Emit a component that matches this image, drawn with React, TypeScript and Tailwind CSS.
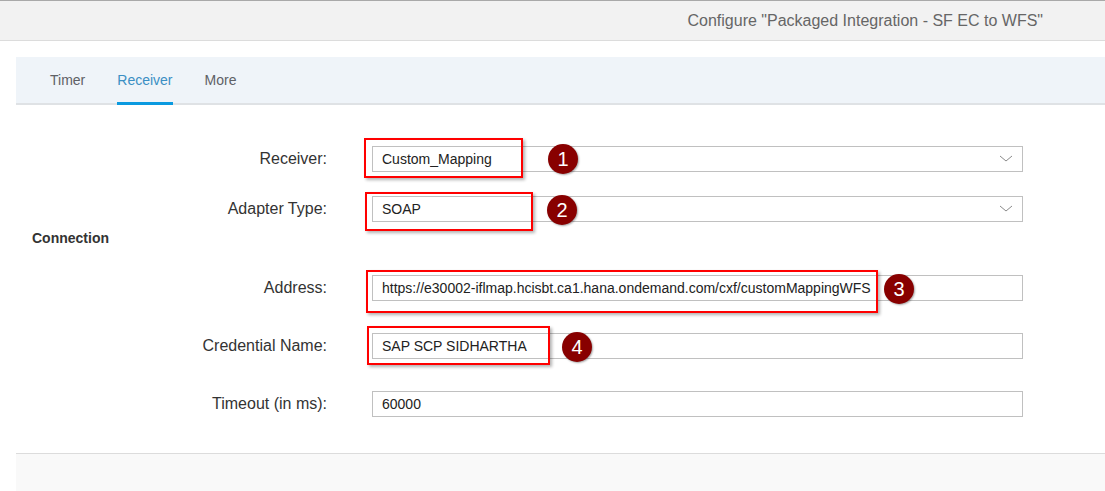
import React from "react";

function Chevron() {
  return (
    <svg width="14" height="8" viewBox="0 0 14 8" className="absolute right-[9px] top-[8px]">
      <path d="M1 1 L7 6 L13 1" fill="none" stroke="#8a8a8a" strokeWidth="1" />
    </svg>
  );
}

function Badge({ n, className }: { n: number; className: string }) {
  return (
    <div
      className={
        "absolute w-[30px] h-[30px] rounded-full bg-[#880000] text-white text-[20px] leading-none flex items-center justify-center shadow-[1px_1px_2px_rgba(0,0,0,0.35)] " +
        className
      }
    >
      {n}
    </div>
  );
}

function Row({
  label,
  value,
  select,
  box,
  badge,
  className,
}: {
  label: string;
  value: string;
  select?: boolean;
  box?: string;
  badge?: React.ReactNode;
  className?: string;
}) {
  return (
    <div className={"flex items-center h-[26px] " + (className || "")}>
      <div className="w-[327px] text-right text-[16px] text-[#333]">{label}</div>
      <div className="ml-[45px] w-[651px] h-[26px] relative border border-[#c0c0c0] bg-white flex items-center pl-[9px] text-[14px] text-[#222]">
        {value}
        {select && <Chevron />}
        {box && (
          <div
            className={
              "absolute border-2 border-[#ff0000] shadow-[2px_2px_3px_rgba(0,0,0,0.3)] " + box
            }
          />
        )}
        {badge}
      </div>
    </div>
  );
}

export default function App() {
  return (
    <div className="w-[1105px] h-[491px] bg-white overflow-hidden flex flex-col font-['Liberation_Sans',Arial,sans-serif]">
      <div className="h-[41px] bg-[#f2f2f2] border-t border-[#a9a9a9] border-b border-b-[#dcdcdc] flex items-center justify-end pr-[62px] text-[16px] text-[#666]">
        Configure "Packaged Integration - SF EC to WFS"
      </div>
      <div className="mt-[16px] ml-[16px] h-[48px] bg-[#eff4f9] border-b-2 border-[#dfe2e5] flex items-stretch pl-[34px] gap-[32px] text-[14px]">
        <div className="flex items-center text-[#5e6166]">Timer</div>
        <div className="flex items-center text-[#3b8fc4] relative">
          Receiver
          <div className="absolute left-0 right-0 bottom-[-2px] h-[3px] bg-[#0a9ae0]" />
        </div>
        <div className="flex items-center text-[#5e6166]">More</div>
      </div>
      <div className="flex-1 flex flex-col">
        <Row
          className="mt-[41px]"
          label="Receiver:"
          value="Custom_Mapping"
          select
          box="left-[-9px] top-[-9px] w-[159px] h-[40px]"
          badge={<Badge n={1} className="left-[175px] top-[-3px]" />}
        />
        <Row
          className="mt-[24px]"
          label="Adapter Type:"
          value="SOAP"
          select
          box="left-[-8px] top-[-5px] w-[168px] h-[39px]"
          badge={<Badge n={2} className="left-[174px] top-[-2px]" />}
        />
        <div className="mt-[8px] h-[16px] pl-[32px] text-[14px] font-bold text-[#333] leading-[16px]">
          Connection
        </div>
        <Row
          className="mt-[29px]"
          label="Address:"
          value="https://e30002-iflmap.hcisbt.ca1.hana.ondemand.com/cxf/customMappingWFS"
          box="left-[-7px] top-[-6px] w-[512px] h-[43px]"
          badge={<Badge n={3} className="left-[511px] top-[-2px]" />}
        />
        <Row
          className="mt-[32px]"
          label="Credential Name:"
          value="SAP SCP SIDHARTHA"
          box="left-[-6px] top-[-8px] w-[183px] h-[39px]"
          badge={<Badge n={4} className="left-[189px] top-[-2px]" />}
        />
        <Row className="mt-[32px]" label="Timeout (in ms):" value="60000" />
      </div>
      <div className="ml-[16px] h-[38px] bg-[#f9f9f9] border-t border-[#dcdcdc]" />
    </div>
  );
}
